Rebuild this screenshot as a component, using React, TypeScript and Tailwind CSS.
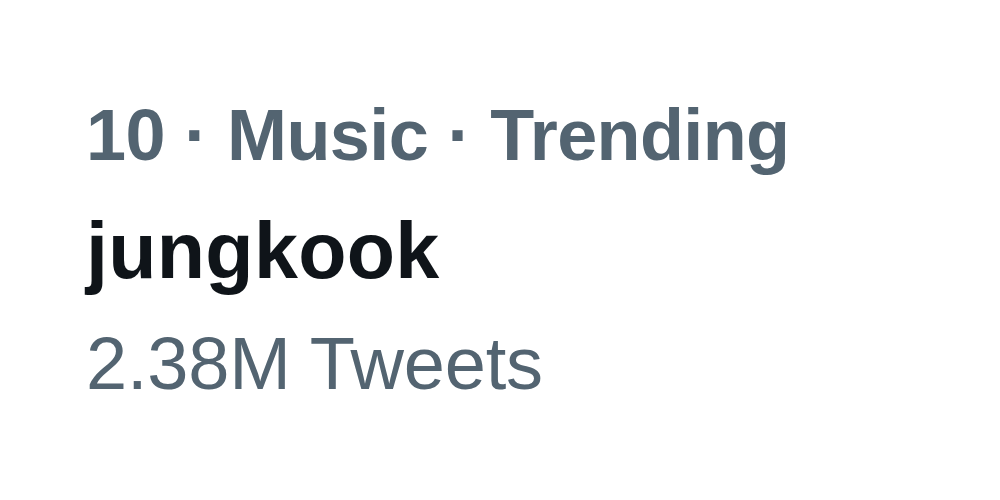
import React from "react";

export default function App() {
  return (
    <div
      className="w-[1000px] h-[500px] bg-white flex flex-col pl-[86px] pt-[95px]"
      style={{ fontFamily: '"Liberation Sans", Arial, sans-serif' }}
    >
      <div className="text-[72px] leading-[80px] tracking-[-0.6px] font-bold text-[#536471] whitespace-nowrap">
        10 · Music · Trending
      </div>
      <div className="mt-[31px] text-[79px] leading-[90px] tracking-[0.3px] font-bold text-[#0f1419] whitespace-nowrap">
        jungkook
      </div>
      <div className="mt-[28px] text-[74px] leading-[80px] tracking-[-0.2px] text-[#536471] whitespace-nowrap">
        2.38M Tweets
      </div>
    </div>
  );
}
